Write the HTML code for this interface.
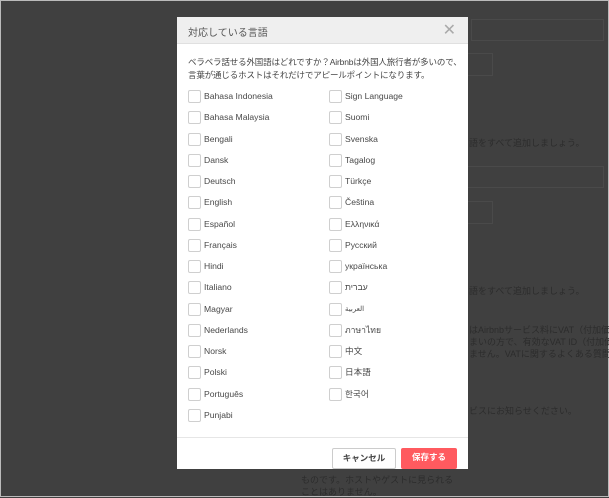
<html><head><style>
*{margin:0;padding:0;box-sizing:border-box}
body{width:609px;height:497px;background:#404040;position:relative;overflow:hidden;font-family:"Liberation Sans","Noto Sans CJK JP",sans-serif;border:1px solid #bbb}
.bg{position:absolute;border:1px solid #4a4a4a}
.t{position:absolute;color:#2c2c2c;font-size:9px;white-space:nowrap}
.m{position:absolute;left:176px;top:16px;width:291px;height:452px;background:#fff}
.h{height:27px;background:#efefef;border-bottom:1px solid #e0e0e0;font-size:10px;color:#555;padding:7px 0 0 11px;position:relative}
.x{position:absolute;right:12px;top:3px;font-size:16px;color:#aaa;font-weight:100;font-family:"DejaVu Sans",sans-serif}
.d{position:absolute;left:11px;top:39px;font-size:8.5px;line-height:12.5px;color:#444;width:280px;letter-spacing:-0.15px}
.r{position:absolute;font-size:8.6px;color:#484848;height:14px;line-height:13px;padding-left:16px}
.r:before{content:"";position:absolute;left:0;top:0;width:11px;height:11px;border:1px solid #cfcfcf;border-radius:2px}
.f{position:absolute;left:0;right:0;top:420px;border-top:1px solid #e6e6e6}
.b{position:absolute;top:431px;height:21px;font-size:8.5px;font-weight:bold;text-align:center;line-height:19px;border-radius:2px}
</style></head><body>
<div class="bg" style="left:470px;top:18px;width:133px;height:22px"></div>
<div class="bg" style="left:466px;top:52px;width:26px;height:23px"></div>
<div class="bg" style="left:466px;top:165px;width:137px;height:22px"></div>
<div class="bg" style="left:466px;top:200px;width:26px;height:23px"></div>
<div class="t" style="left:468px;top:135px">語をすべて追加しましょう。</div>
<div class="t" style="left:468px;top:283px">語をすべて追加しましょう。</div>
<div class="t" style="left:468px;top:323px;line-height:12px">はAirbnbサービス料にVAT（付加価値<br>まいの方で、有効なVAT ID（付加価<br>ません。VATに関するよくある質問</div>
<div class="t" style="left:468px;top:403px">ビスにお知らせください。</div>
<div class="t" style="left:300px;top:473px;line-height:12px">ものです。ホストやゲストに見られる<br>ことはありません。</div>
<div class="m">
<div class="h">対応している言語<span class="x">✕</span></div>
<div class="d">ベラベラ話せる外国語はどれですか？Airbnbは外国人旅行者が多いので、言葉が通じるホストはそれだけでアピールポイントになります。</div>
<div class="r" style="left:11px;top:73px">Bahasa Indonesia</div>
<div class="r" style="left:11px;top:94px">Bahasa Malaysia</div>
<div class="r" style="left:11px;top:116px">Bengali</div>
<div class="r" style="left:11px;top:137px">Dansk</div>
<div class="r" style="left:11px;top:158px">Deutsch</div>
<div class="r" style="left:11px;top:179px">English</div>
<div class="r" style="left:11px;top:201px">Español</div>
<div class="r" style="left:11px;top:222px">Français</div>
<div class="r" style="left:11px;top:243px">Hindi</div>
<div class="r" style="left:11px;top:264px">Italiano</div>
<div class="r" style="left:11px;top:286px">Magyar</div>
<div class="r" style="left:11px;top:307px">Nederlands</div>
<div class="r" style="left:11px;top:328px">Norsk</div>
<div class="r" style="left:11px;top:349px">Polski</div>
<div class="r" style="left:11px;top:371px">Português</div>
<div class="r" style="left:11px;top:392px">Punjabi</div>
<div class="r" style="left:152px;top:73px">Sign Language</div>
<div class="r" style="left:152px;top:94px">Suomi</div>
<div class="r" style="left:152px;top:116px">Svenska</div>
<div class="r" style="left:152px;top:137px">Tagalog</div>
<div class="r" style="left:152px;top:158px">Türkçe</div>
<div class="r" style="left:152px;top:179px">Čeština</div>
<div class="r" style="left:152px;top:201px">Ελληνικά</div>
<div class="r" style="left:152px;top:222px">Русский</div>
<div class="r" style="left:152px;top:243px">українська</div>
<div class="r" style="left:152px;top:264px">עברית</div>
<div class="r" style="left:152px;top:286px;font-size:7px">العربية</div>
<div class="r" style="left:152px;top:307px">ภาษาไทย</div>
<div class="r" style="left:152px;top:328px">中文</div>
<div class="r" style="left:152px;top:349px">日本語</div>
<div class="r" style="left:152px;top:371px">한국어</div>
<div class="f"></div>
<div class="b" style="left:155px;width:64px;border:1px solid #ccc;color:#444;background:#fff">キャンセル</div>
<div class="b" style="left:224px;width:56px;background:#ff5a5f;color:#fff">保存する</div>
</div>
</body></html>
